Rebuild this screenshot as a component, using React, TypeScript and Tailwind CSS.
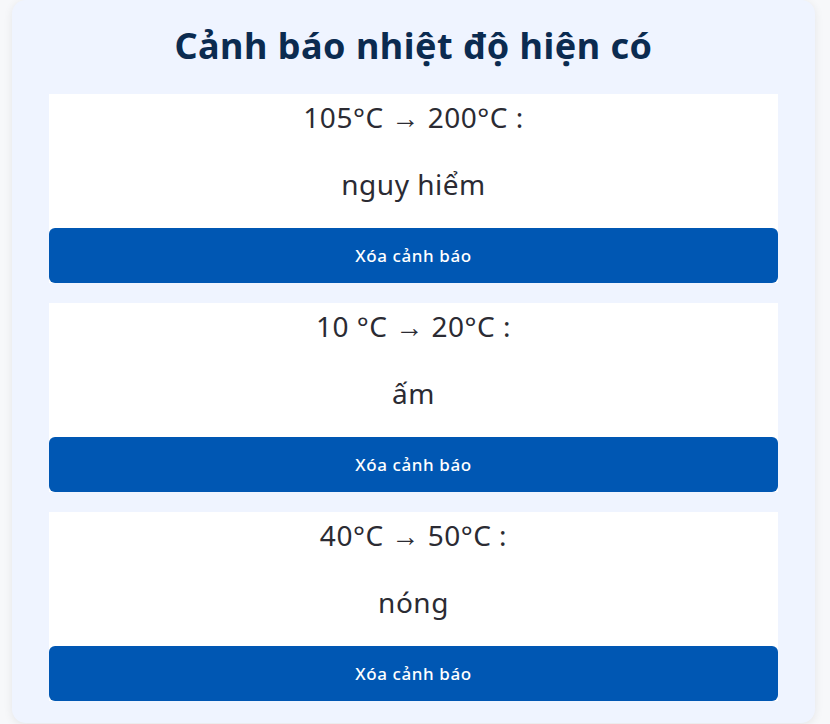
const alerts = [
  { id: 1, range: "105°C → 200°C :", label: "nguy hiểm" },
  { id: 2, range: "10 °C → 20°C :", label: "ấm" },
  { id: 3, range: "40°C → 50°C :", label: "nóng" },
];

export default function App() {
  return (
    <div className="min-h-screen bg-[#f7f8fa] pl-3 pr-[15px] font-['Noto_Sans',sans-serif]">
      <div className="rounded-[14px] bg-[#eff4ff] px-[37px] pb-[22px] pt-[26px] shadow-[0_2px_10px_rgba(0,0,0,0.08)]">
        <h1 className="text-center text-[36px] font-bold leading-[40px] tracking-[0.5px] text-[#0b2b50]">
          Cảnh báo nhiệt độ hiện có
        </h1>

        <div className="mt-[28px] flex flex-col gap-5">
          {alerts.map((a) => (
            <div key={a.id} className="bg-white">
              <div className="pb-[26px] pt-[5px] text-center text-[28px] leading-[36px] tracking-[0.5px] text-[#2b2b33]">
                <p>{a.range}</p>
                <p className="mt-[31px]">{a.label}</p>
              </div>
              <button className="flex h-[55px] w-full items-center justify-center rounded-md bg-[#0057b3] text-[17px] font-medium tracking-[0.6px] text-white">
                Xóa cảnh báo
              </button>
            </div>
          ))}
        </div>
      </div>
    </div>
  );
}
